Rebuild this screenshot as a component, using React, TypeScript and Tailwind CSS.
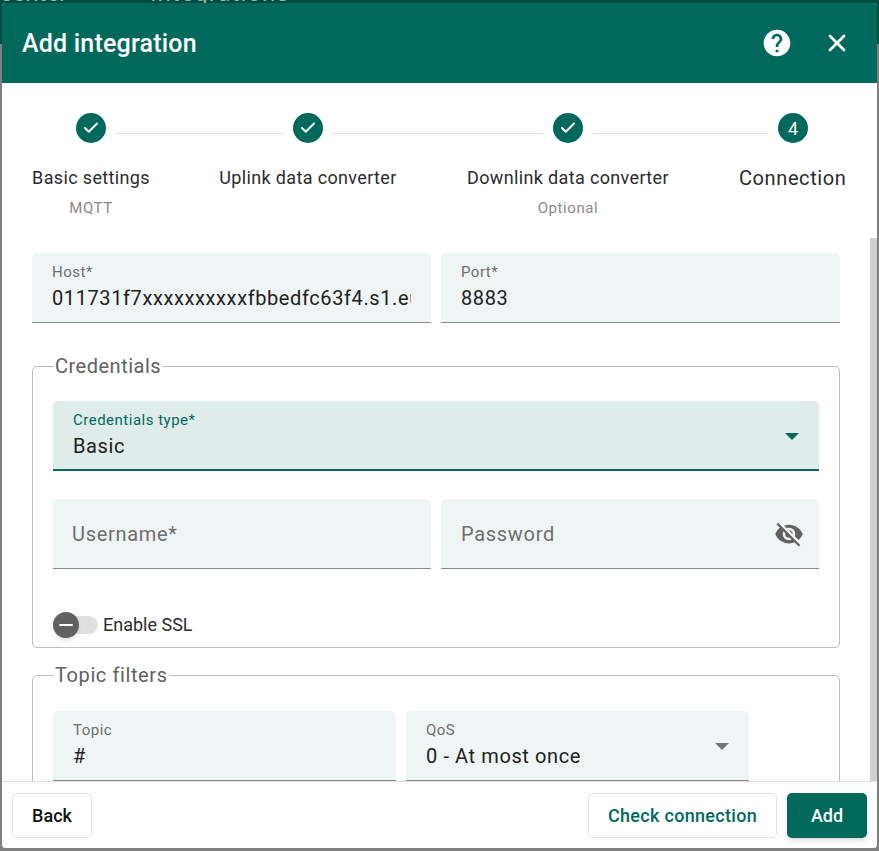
// App.tsx
// Dialogo "Add integration", paso 4 (Connection).
import type { ReactNode } from 'react'
import { Check, X } from 'lucide-react'

function Field({
  label,
  value,
  focused,
  caret,
  className,
}: {
  label: string
  value?: string
  focused?: boolean
  caret?: boolean
  className: string
}) {
  return (
    <div
      className={`relative h-[70px] shrink-0 rounded-t-[5px] border-b px-5 overflow-hidden ${
        focused ? 'bg-[#e0ecea] border-b-2 border-[#00695c]' : 'bg-[#eff5f5] border-[#8a8a8a]'
      } ${className}`}
    >
      <div className={`pt-[9px] text-[15px] leading-5 tracking-[0.5px] ${focused ? 'text-[#00695c]' : 'text-[#6e6e6e]'}`}>
        {label}
      </div>
      <div className="mt-[3px] text-[20px] leading-[26px] tracking-[0.6px] text-[#212121] whitespace-nowrap overflow-hidden">
        {value}
      </div>
      {caret && (
        <div
          className={`absolute right-[20px] top-[32px] w-0 h-0 border-x-[7px] border-x-transparent border-t-[7px] ${
            focused ? 'border-t-[#00695c]' : 'border-t-[#757575]'
          }`}
        />
      )}
    </div>
  )
}

function EmptyField({ label, className, children }: { label: string; className: string; children?: ReactNode }) {
  return (
    <div className={`h-[70px] shrink-0 rounded-t-[5px] bg-[#eff5f5] border-b border-[#8a8a8a] pr-5 flex items-center justify-between ${className}`}>
      <span className="text-[20px] tracking-[0.7px] text-[#6e6e6e]">{label}</span>
      {children}
    </div>
  )
}

function StepDot({ n }: { n?: number }) {
  return (
    <div className="w-[30px] h-[30px] rounded-full bg-[#00695c] text-white flex items-center justify-center text-[18px] shrink-0">
      {n ?? <Check size={18} strokeWidth={2.6} />}
    </div>
  )
}

function StepLine({ className }: { className: string }) {
  return <div className={`h-px bg-[#e0e0e0] mt-[20px] mx-[10px] ${className}`} />
}

function StepLabel({ title, sub, className }: { title: string; sub?: string; className: string }) {
  return (
    <div className={`text-center shrink-0 ${className}`}>
      <div className="pt-px text-[18px] leading-6 tracking-[0.35px] text-[#2b2b2b] whitespace-nowrap">{title}</div>
      {sub && <div className="mt-[8px] text-[15px] leading-5 tracking-[0.6px] text-[#8a8a8a]">{sub}</div>}
    </div>
  )
}

export default function App() {
  return (
    <div
      className="relative w-[879px] h-[851px] overflow-hidden bg-[#7f7f7f] px-[2px] pt-[3px] pb-[3px]"
      style={{ fontFamily: 'Roboto, sans-serif' }}
    >
      {/* fondo detras del dialogo */}
      <div className="absolute left-0 top-0 right-0 h-[44px] bg-[#034a41] overflow-hidden text-[24px] leading-[24px] text-[#9fb5b1]">
        <span className="absolute left-0 -top-[19px]">center</span>
        <span className="absolute left-[88px] -top-[19px]">&gt;</span>
        <span className="absolute left-[150px] -top-[19px] tracking-[1px]">Integrations</span>
      </div>

      <div className="relative h-[845px] flex flex-col rounded-[4px] overflow-hidden bg-white">
        {/* cabecera */}
        <div className="h-[80px] shrink-0 bg-[#00695c] flex items-center justify-between pl-5 pr-[26px] text-white">
          <h1 className="pt-[2px] text-[25px] font-medium tracking-[0.2px]">Add integration</h1>
          <div className="flex items-center gap-[30px]">
            <svg width="32" height="32" viewBox="0 0 24 24" fill="white">
              <path d="M12 2C6.48 2 2 6.48 2 12s4.48 10 10 10 10-4.48 10-10S17.52 2 12 2zm1 17h-2v-2h2v2zm2.07-7.75l-.9.92C13.45 12.9 13 13.5 13 15h-2v-.5c0-1.1.45-2.1 1.17-2.83l1.24-1.26c.37-.36.59-.86.59-1.41 0-1.1-.9-2-2-2s-2 .9-2 2H8c0-2.21 1.79-4 4-4s4 1.79 4 4c0 .88-.36 1.68-.93 2.25z" />
            </svg>
            <X size={28} strokeWidth={2.4} />
          </div>
        </div>

        {/* stepper */}
        <div className="h-[155px] shrink-0 pt-[30px]">
          <div className="flex pl-[74px]">
            <StepDot />
            <StepLine className="w-[167px]" />
            <StepDot />
            <StepLine className="w-[210px]" />
            <StepDot />
            <StepLine className="w-[175px]" />
            <StepDot n={4} />
          </div>
          <div className="flex mt-[22px] pl-[30px]">
            <StepLabel title="Basic settings" sub="MQTT" className="w-[118px]" />
            <StepLabel title="Uplink data converter" className="w-[200px] ml-[58px]" />
            <StepLabel title="Downlink data converter" sub="Optional" className="w-[220px] ml-[50px]" />
            <div className="ml-[61px] pt-px text-[20px] leading-6 tracking-[0.6px] text-[#2b2b2b]">Connection</div>
          </div>
        </div>

        {/* contenido con scroll */}
        <div className="flex-1 min-h-0 flex overflow-hidden">
          <div className="flex-1 min-w-0 pl-[30px] pt-[15px]">
            <div className="flex gap-[10px]">
              <Field label="Host*" value="011731f7xxxxxxxxxxfbbedfc63f4.s1.eu.hivemq.cloud" className="w-[399px]" />
              <Field label="Port*" value="8883" className="w-[399px]" />
            </div>

            <fieldset className="w-[808px] h-[293px] mt-[32px] border border-[#bdbdbd] rounded-[5px] px-5">
              <legend className="ml-[1px] px-[1px] text-[20px] leading-[22px] tracking-[0.5px] text-[#616161]">Credentials</legend>
              <Field label="Credentials type*" value="Basic" focused caret className="w-[766px] mt-[24px]" />
              <div className="flex gap-[10px] mt-[28px]">
                <EmptyField label="Username*" className="w-[378px] pl-[19px]" />
                <EmptyField label="Password" className="w-[378px] pl-5">
                  <svg width="30" height="30" viewBox="0 0 24 24" fill="#616161" className="-mr-[5px]">
                    <path d="M12 7c2.76 0 5 2.24 5 5 0 .65-.13 1.26-.36 1.83l2.92 2.92c1.51-1.26 2.7-2.89 3.43-4.75-1.73-4.39-6-7.5-11-7.5-1.4 0-2.74.25-3.98.7l2.16 2.16C10.74 7.13 11.35 7 12 7zM2 4.27l2.28 2.28.46.46C3.08 8.3 1.78 10.02 1 12c1.73 4.39 6 7.5 11 7.5 1.55 0 3.03-.3 4.38-.84l.42.42L19.73 22 21 20.73 3.27 3 2 4.27zM7.53 9.8l1.55 1.55c-.05.21-.08.43-.08.65 0 1.66 1.34 3 3 3 .22 0 .44-.03.65-.08l1.55 1.55c-.67.33-1.41.53-2.2.53-2.76 0-5-2.24-5-5 0-.79.2-1.53.53-2.2zm4.31-.78l3.15 3.15.02-.16c0-1.66-1.34-3-3-3l-.17.01z" />
                  </svg>
                </EmptyField>
              </div>
              <div className="flex items-center mt-[42px]">
                <div className="relative w-[45px] h-[18px] rounded-full bg-[#e0e0e0]">
                  <div className="absolute left-0 -top-[4px] w-[26px] h-[26px] rounded-full bg-[#616161] shadow-md flex items-center justify-center">
                    <div className="w-[14px] h-[2px] bg-white rounded-full" />
                  </div>
                </div>
                <span className="ml-[5px] text-[18px] text-[#2b2b2b]">Enable SSL</span>
              </div>
            </fieldset>

            <fieldset className="w-[808px] h-[300px] mt-[16px] border border-[#bdbdbd] rounded-[5px] px-5">
              <legend className="ml-[1px] px-[1px] text-[20px] leading-[22px] tracking-[0.6px] text-[#616161]">Topic filters</legend>
              <div className="flex gap-[10px] mt-[25px]">
                <Field label="Topic" value="#" className="w-[343px]" />
                <Field label="QoS" value="0 - At most once" caret className="w-[343px]" />
              </div>
            </fieldset>
          </div>
          <div className="w-[7px] shrink-0 bg-[#d0d0d0]" />
        </div>

        {/* acciones */}
        <div className="h-[67px] shrink-0 border-t border-[#e0e0e0] bg-white flex items-start justify-between pt-[11px] px-[10px]">
          <button className="w-[80px] h-[45px] rounded-[5px] border border-[#e0e0e0] text-[18px] font-medium text-[#111]">Back</button>
          <div className="flex gap-[10px]">
            <button className="w-[189px] h-[45px] rounded-[5px] border border-[#e0e0e0] text-[18px] font-medium tracking-[0.3px] text-[#00695c]">Check connection</button>
            <button className="w-[80px] h-[45px] rounded-[5px] bg-[#00695c] shadow-md text-[18px] font-medium text-white">Add</button>
          </div>
        </div>
      </div>
    </div>
  )
}
